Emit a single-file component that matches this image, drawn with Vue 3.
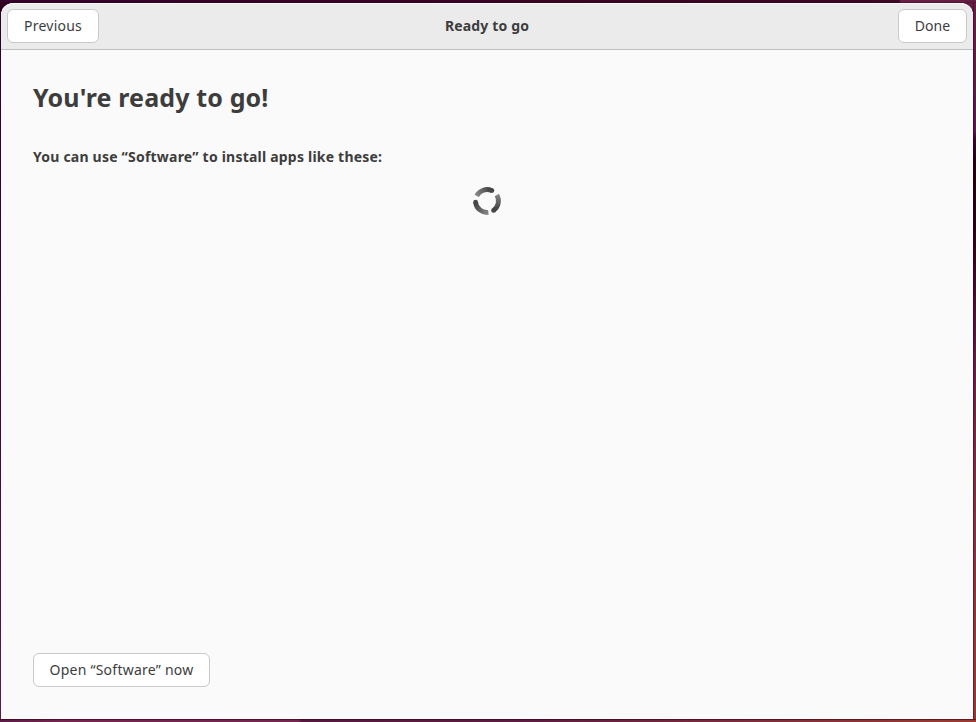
<script setup>
const segments = [
  { d: 'M5.7 10.9A11.5 11.5 0 0 1 20.9 5.6', x: 20.9, y: 5.6, g: 'url(#fadeTop)' },
  { d: 'M25.8 10A11.5 11.5 0 0 1 22.6 25.4', x: 22.6, y: 25.4, g: 'url(#fadeRight)' },
  { d: 'M17.4 27.4A11.5 11.5 0 0 1 4.6 17.2', x: 4.6, y: 17.2, g: 'url(#fadeLeft)' },
]
</script>

<template>
  <div class="desktop">
    <div class="edge-top"></div>
    <div class="middle">
      <div class="edge-left"></div>
      <main class="window">
        <header class="headerbar">
          <div class="side"><button class="btn previous">Previous</button></div>
          <div class="title">Ready to go</div>
          <div class="side end"><button class="btn done">Done</button></div>
        </header>
        <section class="content">
          <h1>You're ready to go!</h1>
          <p>You can use “Software” to install apps like these:</p>
          <svg class="spinner" width="32" height="32" viewBox="0 0 32 32" fill="none">
            <defs>
              <linearGradient id="fadeTop" gradientUnits="userSpaceOnUse" x1="5" y1="11" x2="19" y2="5">
                <stop offset="0" stop-color="#8a8a8a" /><stop offset="1" stop-color="#464648" />
              </linearGradient>
              <linearGradient id="fadeRight" gradientUnits="userSpaceOnUse" x1="27" y1="9" x2="25" y2="23">
                <stop offset="0" stop-color="#8a8a8a" /><stop offset="1" stop-color="#464648" />
              </linearGradient>
              <linearGradient id="fadeLeft" gradientUnits="userSpaceOnUse" x1="18" y1="28" x2="5" y2="19">
                <stop offset="0" stop-color="#8a8a8a" /><stop offset="1" stop-color="#464648" />
              </linearGradient>
            </defs>
            <g v-for="s in segments" :key="s.d">
              <path :d="s.d" :stroke="s.g" stroke-width="4.8" />
              <circle :cx="s.x" :cy="s.y" r="2.4" fill="#464648" />
            </g>
          </svg>
          <button class="btn open">Open “Software” now</button>
        </section>
      </main>
      <div class="edge-right"></div>
    </div>
    <div class="edge-bottom"></div>
  </div>
</template>

<style>
body { margin: 0; background: #30001f; overflow: hidden; }
</style>

<style scoped>
* { box-sizing: border-box; }
.desktop {
  width: 976px; height: 722px;
  display: grid; grid-template-rows: 3px 716px 3px;
  background: linear-gradient(90deg, #30001f 0 50%, #651d43 50%);
  font-family: "Noto Sans", "Open Sans", sans-serif;
  font-size: 14px; color: #3d3d3d;
}
.edge-top { background: linear-gradient(90deg, #35002a 0, #3a0424 60%, #3d0a22 899px, #6a2047 901px, #651d43 100%) border-box; border-bottom: 1px solid rgba(30, 0, 20, .3); }
.middle { display: grid; grid-template-columns: 1px 972px 3px; }
.edge-left { background: linear-gradient(#2e0020, #3d0630 50%, #5c1b45 100%); }
.edge-right { background: linear-gradient(#651d43 0, #5b1845 128px, #3a0628 136px, #250010 160px, #2c0015 230px, #6b1d40 370px, #7e2d42 480px, #963535 640px, #983733 100%) border-box; border-left: 1px solid rgba(40, 0, 15, .4); }
.edge-bottom { background: linear-gradient(90deg, #5c1b45 0, #74244e 60px, #74264f 298px, #56183f 302px, #5c1b40 520px, #7c2b3c 740px, #9b3a31 100%) border-box; border-top: 1px solid rgba(40, 0, 15, .5); }
.window { display: flex; flex-direction: column; background: #fafafa; border-radius: 12px 12px 0 0; overflow: hidden; }
.headerbar {
  height: 47px; flex: none; display: flex; align-items: flex-start; justify-content: space-between;
  padding: 6px; background: #ebebeb; border-bottom: 1px solid #bfbfbf; border-radius: 12px 12px 0 0; box-shadow: inset 0 1px #fafafa;
}
.side { width: 120px; display: flex; }
.side.end { justify-content: flex-end; }
.title { font-weight: 700; line-height: 34px; letter-spacing: .16px; }
.btn {
  height: 34px; padding: 0; border: 1px solid #c9c9c9; border-radius: 6px; background: #fff;
  font: inherit; color: inherit; line-height: 32px; text-align: center; white-space: nowrap; letter-spacing: .24px;
}
.previous { width: 92px; }
.done { width: 69px; letter-spacing: 0; }
.content { flex: 1; display: flex; flex-direction: column; align-items: flex-start; padding: 26px 32px 32px; }
h1 { margin: 0; font-size: 25px; line-height: 42px; font-weight: 700; white-space: nowrap; letter-spacing: .14px; }
p { margin: 28px 0 0; font-weight: 700; line-height: 22px; white-space: nowrap; letter-spacing: .215px; }
.spinner { align-self: center; margin-top: 17px; }
.open { width: 177px; margin-top: auto; }
</style>
